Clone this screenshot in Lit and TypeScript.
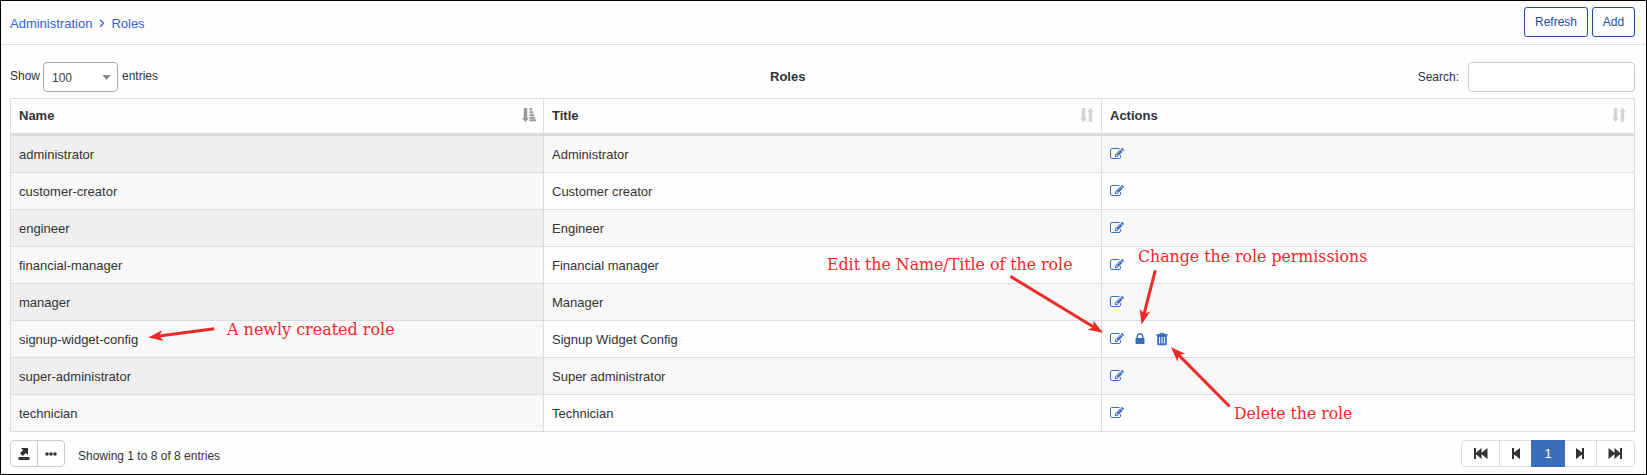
import { LitElement, html, svg, css } from "lit";
import { customElement } from "lit/decorators.js";

interface Role { name: string; title: string; custom?: boolean }
interface Note { text: string; x: number; y: number; width: number; from: [number, number]; to: [number, number] }

const ROLES: Role[] = [
  { name: "administrator", title: "Administrator" },
  { name: "customer-creator", title: "Customer creator" },
  { name: "engineer", title: "Engineer" },
  { name: "financial-manager", title: "Financial manager" },
  { name: "manager", title: "Manager" },
  { name: "signup-widget-config", title: "Signup Widget Config", custom: true },
  { name: "super-administrator", title: "Super administrator" },
  { name: "technician", title: "Technician" },
];

const NOTES: Note[] = [
  { text: "A newly created role", x: 227, y: 334.8, width: 167.6, from: [214.3, 328.8], to: [148.3, 337.5] },
  { text: "Edit the Name/Title of the role", x: 827, y: 270, width: 245.5, from: [1010.5, 276.4], to: [1103, 332.7] },
  { text: "Change the role permissions", x: 1138, y: 262, width: 229.3, from: [1155.3, 270.3], to: [1141.4, 324.4] },
  { text: "Delete the role", x: 1234, y: 419, width: 118.3, from: [1229.6, 406.5], to: [1171, 347.2] },
];

const editIcon = html`<svg class="ico" viewBox="0 0 1792 1792"><path d="M888 1184l116-116-152-152-116 116v56h96v96h56zm440-720q-16-16-33 1l-350 350q-17 17-1 33t33-1l350-350q17-17 1-33zm80 594v190q0 119-84.500 203.500t-203.500 84.500h-832q-119 0-203.500-84.500t-84.500-203.500v-832q0-119 84.500-203.500t203.500-84.500h832q63 0 117 25 15 7 18 23 3 17-9 29l-49 49q-14 14-32 8-23-6-45-6h-832q-66 0-113 47t-47 113v832q0 66 47 113t113 47h832q66 0 113-47t47-113v-126q0-13 9-22l64-64q15-15 35-7t20 29zm-96-738l288 288-672 672h-288v-288zm444 132l-92 92-288-288 92-92q28-28 68-28t68 28l152 152q28 28 28 68t-28 68z"/></svg>`;
const lockIcon = html`<svg class="ico lock" viewBox="0 0 1792 1792"><path d="M640 768h512v-192q0-106-75-181t-181-75-181 75-75 181v192zm832 96v576q0 40-28 68t-68 28h-960q-40 0-68-28t-28-68v-576q0-40 28-68t68-28h32v-192q0-184 132-316t316-132 316 132 132 316v192h32q40 0 68 28t28 68z"/></svg>`;
const trashIcon = html`<svg class="ico trash" viewBox="0 0 14 14"><path fill-rule="evenodd" d="M4.500 2V1.800Q4.500.8 5.500.8H8.500Q9.500.8 9.500 1.800V2H12.500V3.800H1.500V2ZM5.600 2H8.400V1.700H5.600ZM2.200 3.800H11.800V12Q11.800 13.200 10.600 13.200H3.400Q2.200 13.200 2.200 12ZM4.100 5V11.600H5.100V5ZM6.500 5V11.600H7.500V5ZM8.900 5V11.600H9.900V5Z"/></svg>`;
const sortBoth = html`<svg class="sort" width="14" height="14" viewBox="0 0 14 14"><path d="M1.800 0H5.200V10.300H7L3.500 14 0 10.300H1.800ZM8.800 14V3.700H7L10.500 0 14 3.700H12.200V14Z"/></svg>`;
const sortAsc = html`<svg class="sort active" width="14" height="14" viewBox="0 0 14 14"><path d="M1.800 0H5.200V10.300H7L3.500 14 0 10.300H1.800ZM7.600 0H10V2.400H7.600ZM7.600 3.200H11.200V5.400H7.600ZM7.600 6.200H12.200V8.200H7.600ZM7.600 8.900H13.200V10.700H7.600ZM7.600 11.300H14V13.300H7.600Z"/></svg>`;

function arrow([x1, y1]: [number, number], [x2, y2]: [number, number]) {
  const len = Math.hypot(x2 - x1, y2 - y1);
  const angle = (Math.atan2(y2 - y1, x2 - x1) * 180) / Math.PI;
  return svg`<g transform="translate(${x2} ${y2}) rotate(${angle})">
    <path d="M${-len} -1.500H-9V1.500H${-len}Z"/>
    <path d="M0 0L-14.600 -5.400L-11 0L-14.600 5.400Z"/>
  </g>`;
}

@customElement("app-root")
export class AppRoot extends LitElement {
  static styles = css`
    :host { display: block; font: 13px/18px "Liberation Sans", Arial, sans-serif; color: #333; }
    * { box-sizing: border-box; }
    .page { position: relative; height: 475px; border: 1px solid #000; background: #fefefe; overflow: hidden; }
    .top { height: 44px; border-bottom: 1px solid #dcdcdc; padding: 6px 11px 0 9px; display: flex; justify-content: space-between; }
    .crumbs { display: flex; color: #3063d8; padding-top: 8px; }
    .crumbs svg { margin: 4px 6.500px 0 6.500px; fill: none; stroke: #3063d8; stroke-width: 1.300; }
    .buttons { display: flex; gap: 4px; }
    .btn { height: 30px; border: 1px solid #1d4ca3; border-radius: 3px; background: #fff; color: #1d4ca3; font: 12px/28px "Liberation Sans", Arial, sans-serif; padding: 0; text-align: center; width: 43px; }
    .btn.wide { width: 64px; }
    .tools { height: 53px; padding: 17px 11px 0 9px; display: grid; grid-template-columns: 760px auto 1fr; font-size: 12px; }
    .length { display: flex; line-height: 28px; }
    .show { width: 33px; line-height: 29px; }
    .entries { line-height: 29px; margin-left: 4px; }
    .select { width: 75px; height: 30px; border: 1px solid #aaa; border-radius: 4px; background: #fff; padding: 1px 6px 0 8px; color: #444; display: flex; justify-content: space-between; line-height: 29px; }
    .select svg { fill: #888; margin-top: 11px; }
    .title { font-weight: bold; font-size: 13px; line-height: 29px; }
    .search { display: flex; justify-content: flex-end; line-height: 30px; gap: 9px; }
    .field { width: 167px; height: 30px; border: 1px solid #ccc; border-radius: 4px; background: #fff; }
    .table { margin: 0 11px 0 9px; border: 1px solid #dcdcdc; border-bottom: 0; }
    .row { display: grid; grid-template-columns: 533px 558px 532px; height: 37px; border-bottom: 1px solid #dcdcdc; }
    .row.head { border-bottom-width: 3px; font-weight: bold; }
    .cell { display: flex; align-items: center; padding: 0 8px; border-right: 1px solid #dcdcdc; }
    .cell.text { padding-top: 2px; }
    .cell:last-child { border-right: 0; }
    .head .cell { justify-content: space-between; padding-bottom: 1px; padding-right: 7px; }
    .head .cell:last-child { padding-right: 8px; }
    .row.odd { background: #f8f8f8; }
    .row.odd .cell:first-child { background: #efefef; }
    .row.even .cell:first-child { background: #f8f8f8; }
    .sort { fill: #d4d4d4; margin-bottom: 1px; }
    .sort.active { fill: #999; }
    .ico { width: 14px; height: 14px; fill: #3b6db8; }
    .lock { margin-left: 9px; }
    .trash { margin-left: 8px; }
    .foot { padding: 8px 11px 0 9px; display: flex; font-size: 12px; }
    .group { display: flex; height: 27px; border: 1px solid #ccc; border-radius: 4px; background: #fff; overflow: hidden; }
    .group span { display: flex; align-items: center; justify-content: center; width: 27px; border-right: 1px solid #ccc; }
    .group span:last-child { border-right: 0; width: 26px; }
    .group svg, .pager svg { fill: #333; }
    .info { margin-left: 13px; line-height: 33px; height: 27px; flex: 1; }
    .pager { display: flex; height: 27px; width: 174px; border: 1px solid #dcdcdc; border-radius: 4px; background: #fff; }
    .pager span { display: flex; align-items: center; justify-content: center; width: 38px; border-right: 1px solid #dcdcdc; }
    .pager .prev { width: 31px; border: 0; }
    .pager .next { width: 32px; padding-right: 2px; }
    .pager span:last-child { width: 37px; border: 0; padding-right: 1px; }
    .pager .current { width: 34px; background: #3b6db8; color: #fff; margin: -1px 0; border: 0; font-size: 13px; }
    .notes { position: absolute; left: -1px; top: -1px; fill: #ef2929; font: 16px "DejaVu Serif Condensed", "DejaVu Serif", serif; font-stretch: condensed; pointer-events: none; }
  `;

  render() {
    return html`<div class="page">
      <header class="top">
        <nav class="crumbs"><span>Administration</span><svg width="6" height="9" viewBox="0 0 6 9"><path d="M1 .8L4.500 4.300 1 7.800"/></svg><span>Roles</span></nav>
        <div class="buttons"><button class="btn wide">Refresh</button><button class="btn">Add</button></div>
      </header>
      <section class="tools">
        <div class="length"><span class="show">Show</span><div class="select"><span>100</span><svg width="9" height="5" viewBox="0 0 9 5"><path d="M.3 0H8.700L4.500 5Z"/></svg></div><span class="entries">entries</span></div>
        <div class="title">Roles</div>
        <div class="search"><span>Search:</span><div class="field"></div></div>
      </section>
      <section class="table">
        <div class="row head">
          <div class="cell">Name${sortAsc}</div><div class="cell">Title${sortBoth}</div><div class="cell">Actions${sortBoth}</div>
        </div>
        ${ROLES.map((r, i) => html`<div class="row ${i % 2 ? "even" : "odd"}">
          <div class="cell text">${r.name}</div><div class="cell text">${r.title}</div>
          <div class="cell">${editIcon}${r.custom ? html`${lockIcon}${trashIcon}` : ""}</div>
        </div>`)}
      </section>
      <footer class="foot">
        <div class="group">
          <span><svg width="12" height="12" viewBox="0 0 12 12"><path d="M.5 9H11.500V12H.5ZM3 0H10V7L7.800 5 4.800 8 2 5.200 5 2.200Z"/></svg></span>
          <span><svg width="12" height="4" viewBox="0 0 12 4"><circle cx="2" cy="2" r="1.800"/><circle cx="6" cy="2" r="1.800"/><circle cx="10" cy="2" r="1.800"/></svg></span>
        </div>
        <div class="info">Showing 1 to 8 of 8 entries</div>
        <div class="pager">
          <span><svg width="14" height="11" viewBox="0 0 14 11"><path d="M0 0H2V4.800L7.500 0V4.800L13.500 0V11L7.500 6.200V11L2 6.200V11H0Z"/></svg></span>
          <span class="prev"><svg width="8" height="11" viewBox="0 0 8 11"><path d="M0 0H2V4.500L8 0V11L2 6.500V11H0Z"/></svg></span>
          <span class="current">1</span>
          <span class="next"><svg width="8" height="11" viewBox="0 0 8 11"><path d="M8 0H6V4.500L0 0V11L6 6.500V11H8Z"/></svg></span>
          <span><svg width="14" height="11" viewBox="0 0 14 11"><path d="M14 0H12V4.800L6.500 0V4.800L.5 0V11L6.500 6.200V11L12 6.200V11H14Z"/></svg></span>
        </div>
      </footer>
      <svg class="notes" width="1647" height="475" viewBox="0 0 1647 475">
        ${NOTES.map((n) => svg`<text x=${n.x} y=${n.y} textLength=${n.width} lengthAdjust="spacingAndGlyphs">${n.text}</text>${arrow(n.from, n.to)}`)}
      </svg>
    </div>`;
  }
}
